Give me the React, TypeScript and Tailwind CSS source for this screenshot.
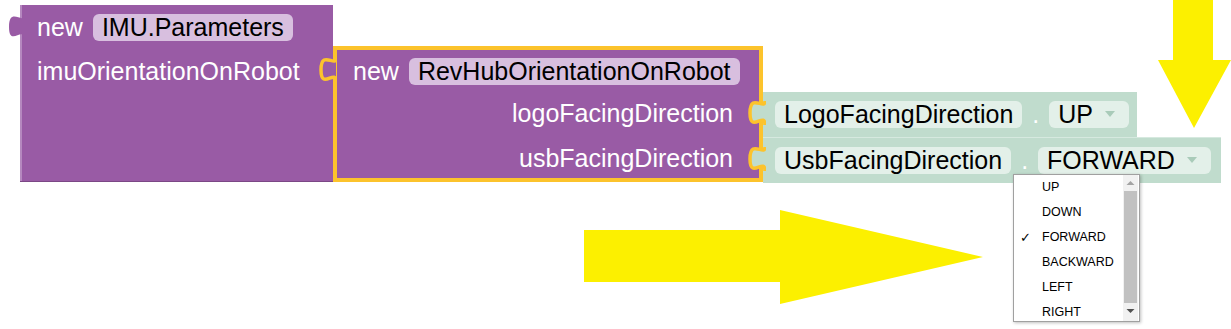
import React from "react";

const PURPLE = "#995ba5";
const PURPLE_PILL = "#d8bfdf";
const GREEN = "#c0dccd";
const GREEN_PILL = "#e3f0e9";
const SELECT = "#fcc32c";

// Blockly-style output tab, drawn to the left of a block edge
function Tab({ fill, stroke }: { fill: string; stroke?: string }) {
  const d = "M18,1 c0,10 -15,-9 -15,12 s15,-2 15,12";
  return (
    <svg width="19" height="26" viewBox="0 0 19 26" className="block">
      <path d={d + " Z"} fill={fill} />
      {stroke && <path d={d} fill="none" stroke={stroke} strokeWidth="3.5" />}
    </svg>
  );
}

function Pill({ children, color }: { children: React.ReactNode; color: string }) {
  return (
    <div
      className="flex h-[27px] items-center rounded-[6px] px-[9px] text-black"
      style={{ backgroundColor: color }}
    >
      {children}
    </div>
  );
}

function EnumBlock({ type, value, width }: { type: string; value: string; width: string }) {
  return (
    <div className={`relative flex h-[45px] items-center pl-[12px] ${width}`} style={{ backgroundColor: GREEN }}>
      <div className="absolute left-[-16px] top-[8px]">
        <Tab fill={GREEN} stroke={SELECT} />
      </div>
      <Pill color={GREEN_PILL}>{type}</Pill>
      <span className="mx-[10px] text-white">.</span>
      <Pill color={GREEN_PILL}>
        <span>{value}</span>
        <svg width="10" height="7" viewBox="0 0 10 7" className="ml-[12px] mr-[5px]">
          <path d="M0,0 L10,0 L5,6 Z" fill="#a9cbb9" />
        </svg>
      </Pill>
    </div>
  );
}

const OPTIONS = ["UP", "DOWN", "FORWARD", "BACKWARD", "LEFT", "RIGHT"];

export default function App() {
  return (
    <div
      className="relative h-[329px] w-[1231px] overflow-hidden bg-white text-[25px] leading-none"
      style={{ fontFamily: '"Liberation Sans", Arial, sans-serif' }}
    >
      <div className="ml-[20px] flex items-start pt-[5px]">
        {/* IMU.Parameters block */}
        <div
          className="relative h-[176px] w-[313px] border-l-[2px] border-[#b588bf] pl-[15px] pt-[9px] text-white shadow-[0_1px_0_#7b4785]"
          style={{ backgroundColor: PURPLE }}
        >
          <div className="absolute left-[-16px] top-[9px]">
            <Tab fill={PURPLE} />
          </div>
          <div className="flex h-[27px] items-center gap-[10px]">
            <span>new</span>
            <Pill color={PURPLE_PILL}>IMU.Parameters</Pill>
          </div>
          <div className="mt-[17px] flex h-[27px] items-center">imuOrientationOnRobot</div>
        </div>

        {/* RevHubOrientationOnRobot block (selected) */}
        <div className="mt-[41px] flex items-start">
          <div
            className="relative h-[136px] w-[430px] border-[4px] pl-[16px] pt-[8px] text-white"
            style={{ backgroundColor: PURPLE, borderColor: SELECT }}
          >
            <div className="absolute left-[-19px] top-[7px]">
              <Tab fill={PURPLE} stroke={SELECT} />
            </div>
            <div className="flex h-[27px] items-center gap-[10px]">
              <span>new</span>
              <Pill color={PURPLE_PILL}>RevHubOrientationOnRobot</Pill>
            </div>
            <div className="mt-[6px] flex h-[45px] items-center justify-end pr-[26px]">logoFacingDirection</div>
            <div className="flex h-[45px] items-center justify-end pr-[26px]">usbFacingDirection</div>
          </div>

          <div className="mt-[46px] flex flex-col">
            <EnumBlock type="LogoFacingDirection" value="UP" width="w-[374px]" />
            <div className="border-t border-[#d6e9df]">
              <EnumBlock type="UsbFacingDirection" value="FORWARD" width="w-[458px]" />
            </div>
          </div>
        </div>
      </div>

      {/* dropdown menu */}
      <div className="absolute left-[1013px] top-[174px] h-[148px] w-[127px] border border-[#a0a0a0] bg-white shadow-[1px_1px_3px_rgba(0,0,0,0.25)]">
        {OPTIONS.map((o) => (
          <div key={o} className="relative flex h-[25px] items-center pl-[28px] text-[12.5px] text-black">
            {o === "FORWARD" && <span className="absolute left-[6px] text-[13px]">✓</span>}
            {o}
          </div>
        ))}
        <div className="absolute right-[1px] top-0 flex h-full w-[15px] flex-col items-center bg-[#f1f1f1]">
          <svg width="9" height="16" viewBox="0 0 9 16">
            <path d="M0.5,10 L8.5,10 L4.5,6 Z" fill="#a3a3a3" />
          </svg>
          <div className="h-[112px] w-[13px] bg-[#c1c1c1]" />
          <svg width="9" height="18" viewBox="0 0 9 18">
            <path d="M0.5,6 L8.5,6 L4.5,10 Z" fill="#505050" />
          </svg>
        </div>
      </div>

      {/* yellow annotation arrows */}
      <svg className="pointer-events-none absolute left-0 top-0" width="1231" height="329">
        <path d="M1173,0 L1213,0 L1213,60 L1231,60 L1194,128 L1158,60 L1173,60 Z" fill="#fcf000" />
        <path d="M584,230 L780,230 L780,210 L983,257 L780,304 L780,282 L584,282 Z" fill="#fcf000" />
      </svg>
    </div>
  );
}
